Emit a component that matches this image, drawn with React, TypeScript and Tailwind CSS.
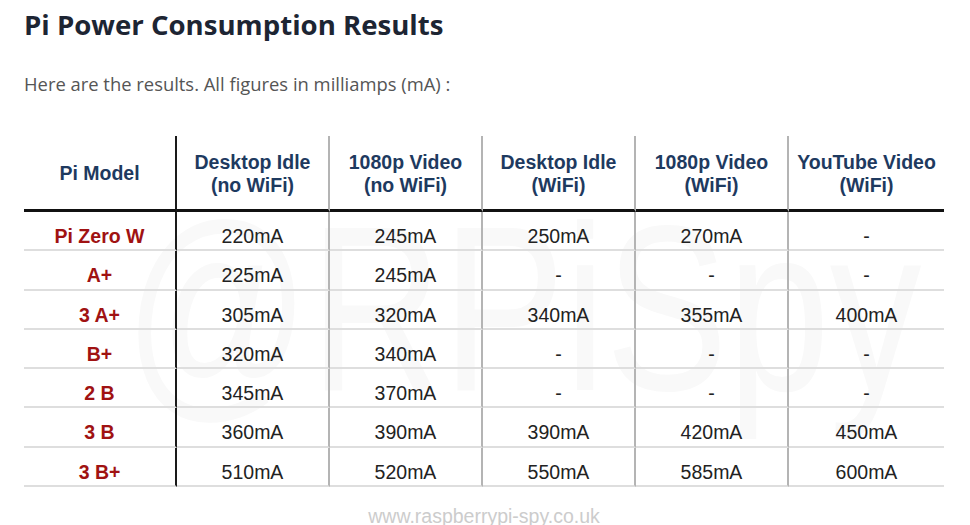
import React from "react";

const headers: [string, string][] = [
  ["Desktop Idle", "(no WiFi)"],
  ["1080p Video", "(no WiFi)"],
  ["Desktop Idle", "(WiFi)"],
  ["1080p Video", "(WiFi)"],
  ["YouTube Video", "(WiFi)"],
];

const rows: [string, string[]][] = [
  ["Pi Zero W", ["220mA", "245mA", "250mA", "270mA", "-"]],
  ["A+", ["225mA", "245mA", "-", "-", "-"]],
  ["3 A+", ["305mA", "320mA", "340mA", "355mA", "400mA"]],
  ["B+", ["320mA", "340mA", "-", "-", "-"]],
  ["2 B", ["345mA", "370mA", "-", "-", "-"]],
  ["3 B", ["360mA", "390mA", "390mA", "420mA", "450mA"]],
  ["3 B+", ["510mA", "520mA", "550mA", "585mA", "600mA"]],
];

function colBorder(i: number) {
  if (i === 0) return "border-r-2 border-[#1a1a1a]";
  if (i === 5) return "";
  return "border-r-2 border-[#b4b4b4]";
}

export default function App() {
  return (
    <div className="relative w-[970px] h-[525px] overflow-hidden bg-white">
      <h1 className="pl-6 pt-[7px] text-[27.6px] leading-[34px] font-bold text-[#1d2533] font-['Open_Sans',sans-serif]">
        Pi Power Consumption Results
      </h1>
      <p className="pl-6 mt-[31px] text-[18.4px] leading-[24px] text-[#555555] font-['Open_Sans',sans-serif]">
        Here are the results. All figures in milliamps (mA) :
      </p>

      <div className="relative ml-6 mt-[40px] w-[920px] font-['Liberation_Sans',Arial,sans-serif]">
        <div
          aria-hidden
          className="pointer-events-none absolute left-[100px] top-[55px] text-[235px] leading-[235px] text-[#f9f9f9] select-none origin-left scale-x-[0.78] whitespace-nowrap"
        >
          @RPiSpy
        </div>

        <div className="relative grid grid-cols-[153px_153px_153px_153px_153px_155px]">
          <div className={`h-[76px] flex items-center justify-center pt-[2px] text-[19.5px] font-bold text-[#1e3a5f] border-b-[3px] border-b-[#111111] ${colBorder(0)}`}>
            Pi Model
          </div>
          {headers.map((h, i) => (
            <div
              key={i}
              className={`h-[76px] flex flex-col items-center justify-center pt-[2px] text-[19.5px] leading-[23px] font-bold text-[#1e3a5f] border-b-[3px] border-b-[#111111] ${colBorder(i + 1)}`}
            >
              <span>{h[0]}</span>
              <span>{h[1]}</span>
            </div>
          ))}

          {rows.map(([model, vals], r) => (
            <React.Fragment key={r}>
              <div
                className={`h-[39.3px] pt-[13px] text-center text-[19.5px] leading-[22px] font-bold text-[#a01212] border-b-2 border-b-[#dedede] ${colBorder(0)}`}
              >
                {model}
              </div>
              {vals.map((v, i) => (
                <div
                  key={i}
                  className={`h-[39.3px] pt-[13px] text-center text-[19.5px] leading-[22px] text-[#222222] border-b-2 border-b-[#dedede] ${colBorder(i + 1)}`}
                >
                  {v}
                </div>
              ))}
            </React.Fragment>
          ))}
        </div>

        <div className="mt-[18px] text-center text-[19.5px] leading-[22px] text-[#cccccc]">
          www.raspberrypi-spy.co.uk
        </div>
      </div>
    </div>
  );
}
